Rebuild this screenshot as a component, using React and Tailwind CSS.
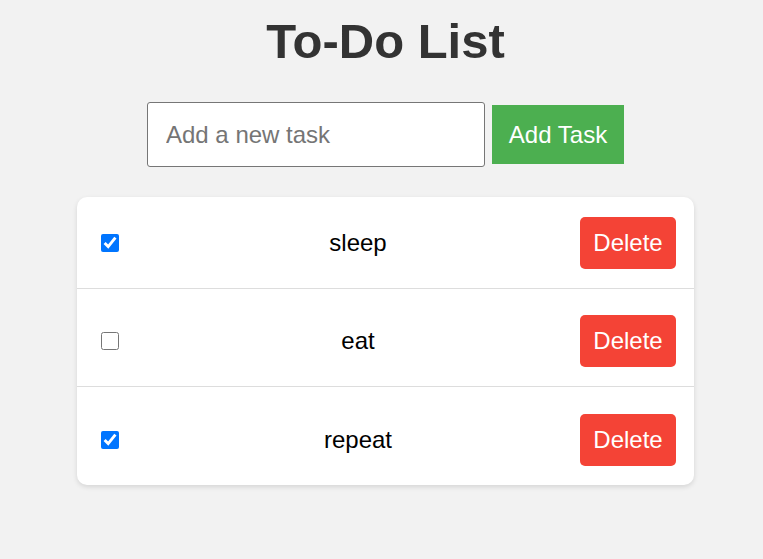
import React, { useState } from 'react';

const initialTasks = [
  { id: 1, text: 'sleep', done: true },
  { id: 2, text: 'eat', done: false },
  { id: 3, text: 'repeat', done: true },
];

export default function App() {
  const [tasks, setTasks] = useState(initialTasks);
  const [draft, setDraft] = useState('');

  const addTask = () => {
    if (!draft.trim()) return;
    setTasks([...tasks, { id: Date.now(), text: draft.trim(), done: false }]);
    setDraft('');
  };

  const toggle = (id) =>
    setTasks(tasks.map((t) => (t.id === id ? { ...t, done: !t.done } : t)));

  const remove = (id) => setTasks(tasks.filter((t) => t.id !== id));

  return (
    <div
      className="min-h-[559px] bg-[#f2f2f2] pl-2 pt-[13px] flex flex-col items-center"
      style={{ fontFamily: '"Liberation Sans", Arial, sans-serif' }}
    >
      <h1 className="text-[49px] leading-[1.15] font-bold text-[#333]">To-Do List</h1>

      <div className="mt-[33px] flex items-center gap-[7px]">
        <input
          type="text"
          value={draft}
          onChange={(e) => setDraft(e.target.value)}
          placeholder="Add a new task"
          className="w-[338px] h-[65px] px-[18px] text-[24px] bg-white border border-[#767676] rounded-[3px] text-black placeholder:text-[#757575] outline-none"
        />
        <button
          onClick={addTask}
          className="w-[132px] h-[59px] bg-[#4caf50] text-white text-[24px]"
        >
          Add Task
        </button>
      </div>

      <ul className="mt-[30px] w-[617px] bg-white rounded-[10px] shadow-[0_2px_5px_rgba(0,0,0,0.12)]">
        {tasks.map((task, index) => (
          <li
            key={task.id}
            className={
              index === 0
                ? 'flex items-center pt-[20px] pb-[19px] pl-[24px] pr-[18px] border-b border-[#ddd]'
                : index === tasks.length - 1
                ? 'flex items-center pt-[27px] pb-[19px] pl-[24px] pr-[18px]'
                : 'flex items-center pt-[26px] pb-[19px] pl-[24px] pr-[18px] border-b border-[#ddd]'
            }
          >
            <input
              type="checkbox"
              checked={task.done}
              onChange={() => toggle(task.id)}
              className="w-[18px] h-[18px] m-0 mr-[17px]"
            />
            <span className="flex-1 text-center text-[24px] text-black">{task.text}</span>
            <button
              onClick={() => remove(task.id)}
              className="w-[96px] h-[52px] bg-[#f44336] text-white text-[24px] rounded-[5px]"
            >
              Delete
            </button>
          </li>
        ))}
      </ul>
    </div>
  );
}
